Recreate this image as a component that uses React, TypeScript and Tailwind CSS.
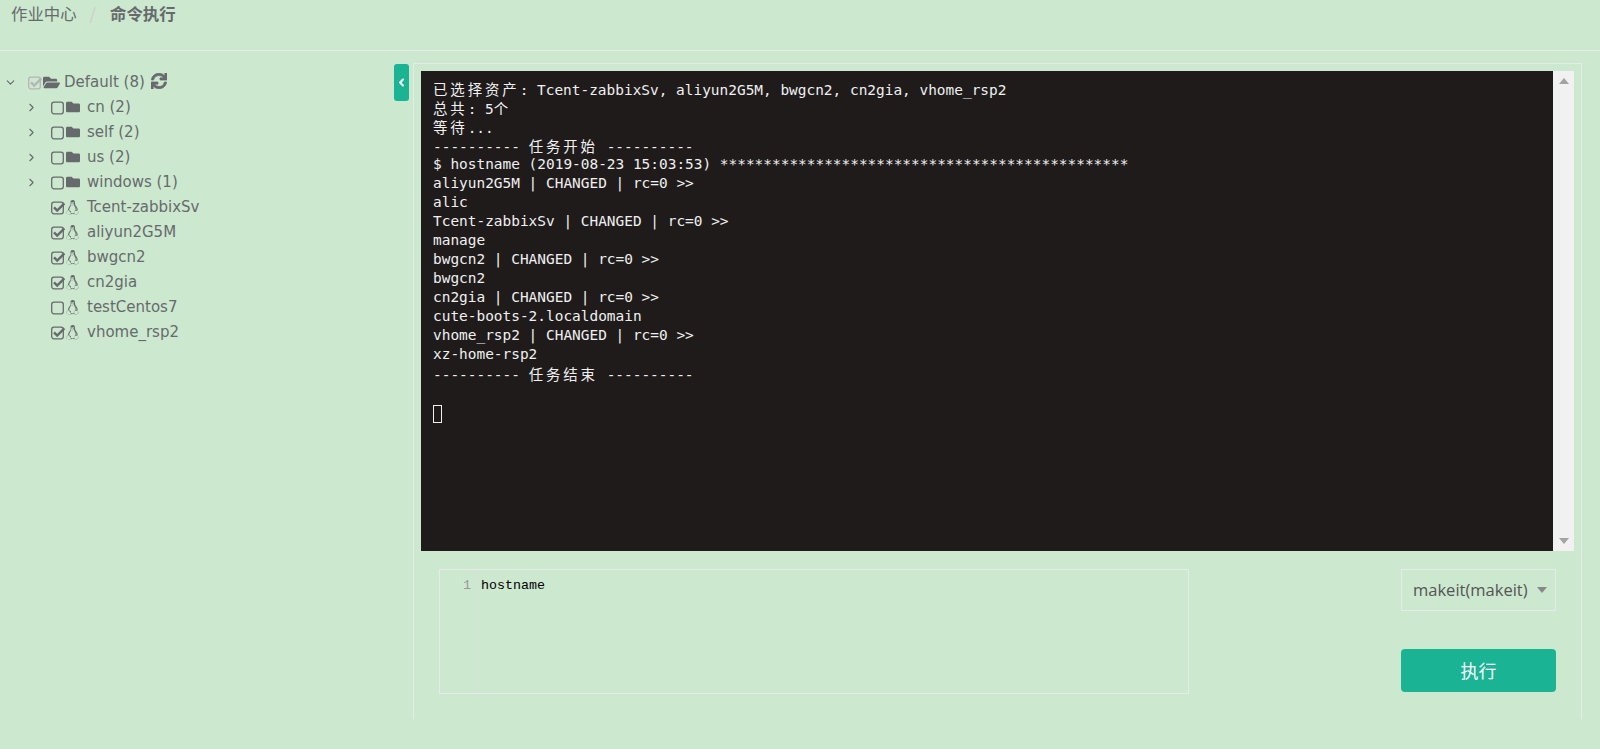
import React from 'react';
import { FaFolder, FaFolderOpen, FaLinux, FaSync, FaAngleLeft } from 'react-icons/fa';
import { LuChevronRight, LuChevronDown } from 'react-icons/lu';

const TERMINAL_LINES = [
  '已选择资产: Tcent-zabbixSv, aliyun2G5M, bwgcn2, cn2gia, vhome_rsp2',
  '总共: 5个',
  '等待...',
  '---------- 任务开始 ----------',
  '$ hostname (2019-08-23 15:03:53) ***********************************************',
  'aliyun2G5M | CHANGED | rc=0 >>',
  'alic',
  'Tcent-zabbixSv | CHANGED | rc=0 >>',
  'manage',
  'bwgcn2 | CHANGED | rc=0 >>',
  'bwgcn2',
  'cn2gia | CHANGED | rc=0 >>',
  'cute-boots-2.localdomain',
  'vhome_rsp2 | CHANGED | rc=0 >>',
  'xz-home-rsp2',
  '---------- 任务结束 ----------',
  '',
];

const GROUPS = ['cn (2)', 'self (2)', 'us (2)', 'windows (1)'];

const HOSTS = [
  { name: 'Tcent-zabbixSv', checked: true },
  { name: 'aliyun2G5M', checked: true },
  { name: 'bwgcn2', checked: true },
  { name: 'cn2gia', checked: true },
  { name: 'testCentos7', checked: false },
  { name: 'vhome_rsp2', checked: true },
];

// xterm gives every CJK character two cells
const TermLine: React.FC<{ text: string }> = ({ text }) => (
  <div className="h-[19px] leading-[19px] whitespace-pre">
    {text.split(/([\u4e00-\u9fff])/).map((part, i) =>
      /[\u4e00-\u9fff]/.test(part) ? (
        <span key={i} className="inline-block w-[17.33px] font-['Noto_Sans_CJK_SC',sans-serif]">
          {part}
        </span>
      ) : (
        <span key={i}>{part}</span>
      )
    )}
  </div>
);

const Check: React.FC<{ checked: boolean; disabled?: boolean }> = ({ checked, disabled }) => (
  <svg width="14" height="14" viewBox="0 0 14 14" className="shrink-0">
    <rect
      x="0.7"
      y="1.2"
      width="11.6"
      height="11.6"
      rx="2.2"
      fill="none"
      stroke={disabled ? '#b3b6b6' : '#676a6c'}
      strokeWidth="1.3"
    />
    {checked && (
      <path
        d="M3 6.3 L6.2 9.6 L13.4 2.4"
        fill="none"
        stroke={disabled ? '#b3b6b6' : '#676a6c'}
        strokeWidth="2.4"
      />
    )}
  </svg>
);

const TreeRow: React.FC<{
  toggle?: boolean;
  icon: React.ReactNode;
  checked: boolean;
  label: string;
}> = ({ toggle, icon, checked, label }) => (
  <div className="flex h-[25px] items-center pl-[25px]">
    <div className="w-[26px] shrink-0 text-[#676a6c]">{toggle && <LuChevronRight size={13} />}</div>
    <Check checked={checked} />
    <div className="flex w-[22px] shrink-0 items-center">{icon}</div>
    <span>{label}</span>
  </div>
);

export default function App() {
  return (
    <div className="h-[749px] overflow-hidden bg-[#cce8cf] font-['DejaVu_Sans',sans-serif] text-[15px] text-[#676a6c]">
      <div className="flex h-[51px] gap-[13px] border-b border-[#e7eaec] pl-[11px] pt-[1px] font-['Noto_Sans_CJK_SC',sans-serif] text-[16.4px] leading-[24px]">
        <span>作业中心</span>
        <span className="text-[#ccc]">/</span>
        <span className="ml-[1px] font-bold">命令执行</span>
      </div>

      <div className="flex">
        <div className="relative w-[413px] shrink-0 pt-[19px]">
          <div className="flex h-[25px] items-center pl-[4px]">
            <div className="w-[24px] shrink-0">
              <LuChevronDown size={13} />
            </div>
            <Check checked disabled />
            <FaFolderOpen size={17} className="ml-px shrink-0" />
            <span className="ml-[4px]">Default (8)</span>
            <FaSync size={16} stroke="currentColor" strokeWidth={24} className="mb-[4px] ml-[6px]" />
          </div>
          {GROUPS.map((g) => (
            <TreeRow key={g} toggle checked={false} label={g} icon={<FaFolder size={14} className="mb-[2px] ml-px" />} />
          ))}
          {HOSTS.map((h) => (
            <TreeRow key={h.name} checked={h.checked} label={h.name} icon={<FaLinux size={15} />} />
          ))}
          <button className="absolute left-[394px] top-[13px] flex h-[37px] w-[15px] items-center justify-center rounded-[3px] bg-[#1ab394] text-white">
            <FaAngleLeft size={13} />
          </button>
        </div>

        <div className="mt-[12px] h-[656px] w-[1169px] shrink-0 border-x border-t border-[#e7eaec] px-[7px] pt-[7px]">
          <div className="flex h-[480px]">
            <div className="w-[1133px] bg-[#1f1b1b] pl-[12px] pt-[8px] font-['DejaVu_Sans_Mono',monospace] text-[14.44px] text-[#f0f0f0]">
              {TERMINAL_LINES.map((line, i) => (
                <TermLine key={i} text={line} />
              ))}
              <div className="mt-[3px] h-[18px] w-[9px] border border-[#f0f0f0]" />
            </div>
            <div className="flex w-[21px] flex-col items-center justify-between bg-[#f1f1f1] py-[7px]">
              <div className="h-0 w-0 border-x-[5px] border-b-[6px] border-x-transparent border-b-[#a3a3a3]" />
              <div className="h-0 w-0 border-x-[5px] border-t-[6px] border-x-transparent border-t-[#a3a3a3]" />
            </div>
          </div>

          <div className="mt-[18px] flex pl-[18px]">
            <div className="flex h-[125px] w-[750px] border border-[#e7eaec] font-['Liberation_Mono',monospace] text-[13.33px] leading-[16px]">
              <div className="h-full w-[37px] border-r border-[#dddddd] pr-[5px] pt-[8px] text-right text-[#999]">1</div>
              <div className="pl-[4px] pt-[8px] text-black">hostname</div>
            </div>
            <div className="ml-[212px] flex w-[155px] flex-col">
              <div className="flex h-[42px] items-center border border-[#e7eaec] pl-[11px] font-['Open_Sans',sans-serif] text-[16.5px] text-[#555]">
                <span>makeit(makeit)</span>
                <div className="ml-[9px] h-0 w-0 border-x-[5px] border-t-[6px] border-x-transparent border-t-[#888]" />
              </div>
              <button className="mt-[38px] h-[43px] rounded-[4px] bg-[#1ab394] font-['Noto_Sans_CJK_SC',sans-serif] text-[18px] text-white">
                执行
              </button>
            </div>
          </div>
        </div>
      </div>
    </div>
  );
}
